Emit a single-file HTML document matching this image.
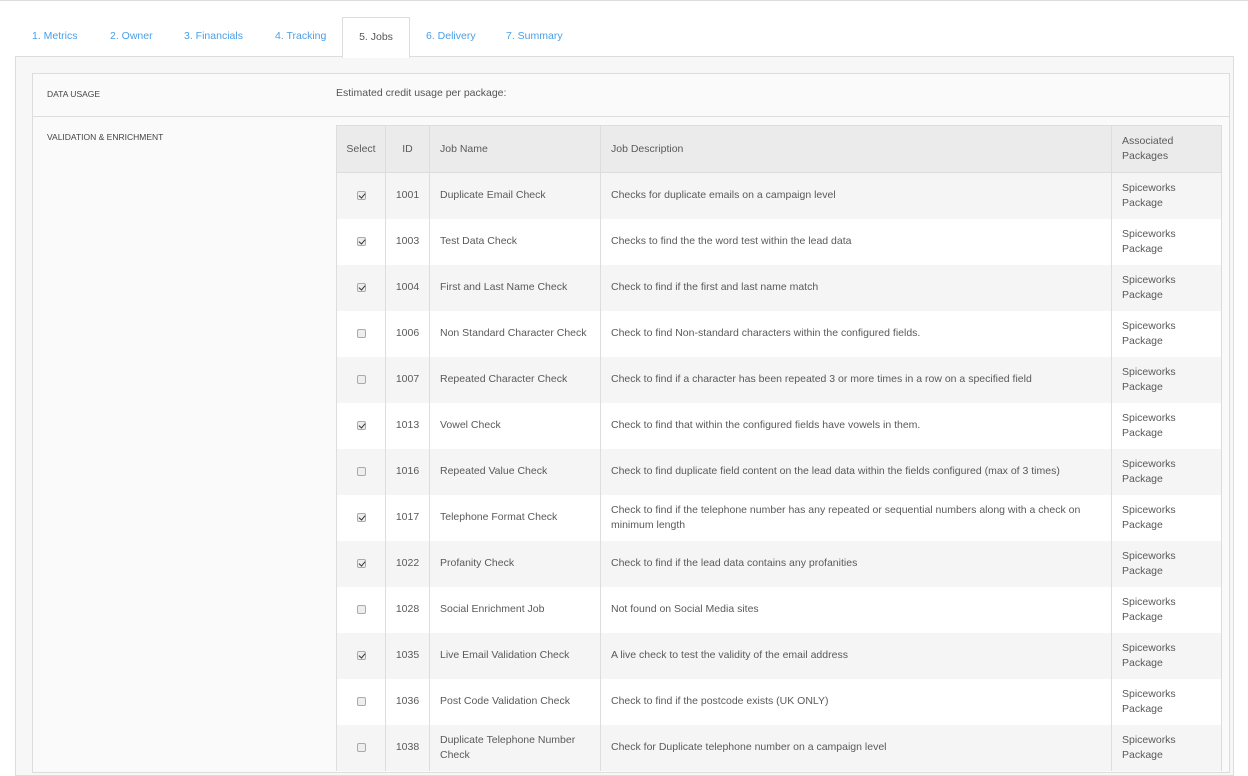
<!DOCTYPE html>
<html><head><style>
*{box-sizing:border-box}
body{margin:0;width:1248px;height:760px;overflow:hidden;background:#fff;font-family:"Liberation Sans",sans-serif;font-size:11px;color:#555}
.top{position:absolute;left:0;top:0;width:1248px;height:1px;background:#ddd}
.tab{position:absolute;top:17px;height:41px;line-height:38px;color:#4a9fe8;font-size:10.5px}
.act{border:1px solid #ddd;border-bottom:none;background:#fff;color:#555;text-align:center;z-index:2}
.outer{position:absolute;left:15px;top:56px;width:1219px;height:720px;background:#f7f7f7;border:1px solid #ddd}
.inner{position:absolute;left:32px;top:73px;width:1198px;height:700px;background:#fafafa;border:1px solid #ddd}
.lbl{position:absolute;font-size:8.5px;color:#444}
.sep{position:absolute;left:32px;top:116px;width:1198px;height:1px;background:#ddd}
table{position:absolute;left:336px;top:125px;width:885px;border-collapse:collapse;table-layout:fixed}
td,th{border-left:1px solid #ddd;border-right:1px solid #ddd;font-weight:normal;text-align:left;padding:0 10px;height:46px;line-height:15px;font-size:10.5px;vertical-align:middle;color:#5a5a5a}
th{background:#ebebeb;height:47px;border:1px solid #ddd}
tr:nth-child(even) td{background:#f5f5f5}
tr:nth-child(odd) td{background:#fff}
.c{text-align:center;padding:0}
.cb{display:inline-block;width:9px;height:9px;border:1px solid #aaa;border-radius:2px;background:#eee;position:relative;vertical-align:middle}
.cb.on::after{content:"";position:absolute;left:2px;top:0px;width:3px;height:5px;border:solid #333;border-width:0 1.5px 1.5px 0;transform:rotate(40deg)}
</style></head><body>
<div class="top"></div>
<div class="outer"></div>
<div class="tab" style="left:32px">1. Metrics</div>
<div class="tab" style="left:110px">2. Owner</div>
<div class="tab" style="left:184px">3. Financials</div>
<div class="tab" style="left:275px">4. Tracking</div>
<div class="tab act" style="left:342px;width:68px">5. Jobs</div>
<div class="tab" style="left:426px">6. Delivery</div>
<div class="tab" style="left:506px">7. Summary</div>
<div class="inner"></div>
<div class="sep"></div>
<div class="lbl" style="left:47px;top:89px">DATA USAGE</div>
<div style="position:absolute;left:336px;top:87px;font-size:10.5px">Estimated credit usage per package:</div>
<div class="lbl" style="left:47px;top:132px">VALIDATION &amp; ENRICHMENT</div>
<table>
<colgroup><col style="width:49px"><col style="width:44px"><col style="width:171px"><col style="width:511px"><col style="width:110px"></colgroup>
<tr><th class="c">Select</th><th class="c">ID</th><th>Job Name</th><th>Job Description</th><th>Associated Packages</th></tr>
<tr><td class="c"><span class="cb on"></span></td><td class="c">1001</td><td>Duplicate Email Check</td><td>Checks for duplicate emails on a campaign level</td><td>Spiceworks Package</td></tr>
<tr><td class="c"><span class="cb on"></span></td><td class="c">1003</td><td>Test Data Check</td><td>Checks to find the the word test within the lead data</td><td>Spiceworks Package</td></tr>
<tr><td class="c"><span class="cb on"></span></td><td class="c">1004</td><td>First and Last Name Check</td><td>Check to find if the first and last name match</td><td>Spiceworks Package</td></tr>
<tr><td class="c"><span class="cb"></span></td><td class="c">1006</td><td>Non Standard Character Check</td><td>Check to find Non-standard characters within the configured fields.</td><td>Spiceworks Package</td></tr>
<tr><td class="c"><span class="cb"></span></td><td class="c">1007</td><td>Repeated Character Check</td><td>Check to find if a character has been repeated 3 or more times in a row on a specified field</td><td>Spiceworks Package</td></tr>
<tr><td class="c"><span class="cb on"></span></td><td class="c">1013</td><td>Vowel Check</td><td>Check to find that within the configured fields have vowels in them.</td><td>Spiceworks Package</td></tr>
<tr><td class="c"><span class="cb"></span></td><td class="c">1016</td><td>Repeated Value Check</td><td>Check to find duplicate field content on the lead data within the fields configured (max of 3 times)</td><td>Spiceworks Package</td></tr>
<tr><td class="c"><span class="cb on"></span></td><td class="c">1017</td><td>Telephone Format Check</td><td>Check to find if the telephone number has any repeated or sequential numbers along with a check on minimum length</td><td>Spiceworks Package</td></tr>
<tr><td class="c"><span class="cb on"></span></td><td class="c">1022</td><td>Profanity Check</td><td>Check to find if the lead data contains any profanities</td><td>Spiceworks Package</td></tr>
<tr><td class="c"><span class="cb"></span></td><td class="c">1028</td><td>Social Enrichment Job</td><td>Not found on Social Media sites</td><td>Spiceworks Package</td></tr>
<tr><td class="c"><span class="cb on"></span></td><td class="c">1035</td><td>Live Email Validation Check</td><td>A live check to test the validity of the email address</td><td>Spiceworks Package</td></tr>
<tr><td class="c"><span class="cb"></span></td><td class="c">1036</td><td>Post Code Validation Check</td><td>Check to find if the postcode exists (UK ONLY)</td><td>Spiceworks Package</td></tr>
<tr><td class="c"><span class="cb"></span></td><td class="c">1038</td><td>Duplicate Telephone Number Check</td><td>Check for Duplicate telephone number on a campaign level</td><td>Spiceworks Package</td></tr>
</table>
</body></html>
